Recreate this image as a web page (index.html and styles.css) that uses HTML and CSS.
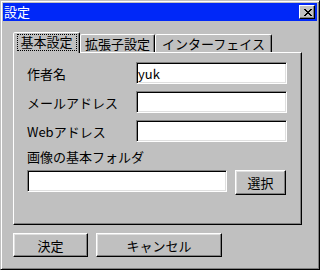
FILE: index.html
```html
<!DOCTYPE html>
<html lang="ja">
<head>
    <meta charset="UTF-8">
    <title>設定</title>
    <link rel="stylesheet" href="styles.css">
</head>
<body>
    <div class="window">
        <div class="titlebar">
            <span class="title">設定</span>
            <button class="close">
                <svg width="8" height="7" viewBox="0 0 8 7" shape-rendering="crispEdges"><path d="M0 0h2v1H0zM6 0h2v1H6zM1 1h2v1H1zM5 1h2v1H5zM2 2h4v1H2zM3 3h2v1H3zM2 4h4v1H2zM1 5h2v1H1zM5 5h2v1H5zM0 6h2v1H0zM6 6h2v1H6z" fill="#000"/></svg>
            </button>
        </div>

        <div class="body">
            <div class="tabs">
                <div class="tab active"><span class="focus">基本設定</span></div>
                <div class="tab tab-ext">拡張子設定</div>
                <div class="tab tab-ui">インターフェイス</div>
            </div>

            <div class="panel">
                <div class="row">
                    <label>作者名</label>
                    <input class="edit" type="text" value="yuk">
                </div>
                <div class="row">
                    <label>メールアドレス</label>
                    <input class="edit" type="text">
                </div>
                <div class="row">
                    <label>Webアドレス</label>
                    <input class="edit" type="text">
                </div>
                <div class="caption">画像の基本フォルダ</div>
                <div class="folder">
                    <input class="edit wide" type="text">
                    <button class="btn select">選択</button>
                </div>
            </div>

            <div class="actions">
                <button class="btn ok">決定</button>
                <button class="btn cancel">キャンセル</button>
            </div>
        </div>
    </div>
</body>
</html>
```

FILE: styles.css
```css
* {
    box-sizing: border-box;
}
body {
    margin: 0;
    font-family: "Noto Sans CJK JP", "Noto Sans", sans-serif;
    font-size: 13px;
    color: #000;
}
.window {
    width: 320px;
    height: 270px;
    background-color: #c0c0c0;
    border: 1px solid;
    border-color: #c0c0c0 #000 #000 #c0c0c0;
    box-shadow: inset 1px 1px #fff, inset -1px -1px #808080;
    padding: 2px;
}
.titlebar {
    height: 18px;
    background-color: #0028f8;
    color: #fff;
    display: flex;
    align-items: center;
    justify-content: space-between;
    padding: 0 2px 0 1px;
}
.title {
    line-height: 16px;
}
.close {
    width: 16px;
    height: 14px;
    padding: 0 0 0 1px;
    background-color: #c0c0c0;
    border: 1px solid;
    border-color: #fff #000 #000 #fff;
    box-shadow: inset -1px -1px #808080;
    display: flex;
    align-items: center;
    justify-content: center;
}
.body {
    padding: 11px 15px 0 10px;
}
.tabs {
    display: flex;
    align-items: flex-end;
    height: 20px;
}
.tab {
    height: 18px;
    background-color: #c0c0c0;
    border: 1px solid;
    border-bottom: 0;
    border-color: #fff #000 transparent #fff;
    border-radius: 2px 2px 0 0;
    box-shadow: inset -1px 0 #808080;
    display: flex;
    align-items: center;
    justify-content: center;
    line-height: 16px;
}
.tab.active {
    width: 67px;
    height: 21px;
    margin-bottom: -1px;
    position: relative;
    z-index: 1;
    align-items: flex-start;
    padding-top: 1px;
}
.focus {
    width: 60px;
    height: 17px;
    border: 1px dotted #000;
    text-align: center;
    line-height: 14px;
}
.tab-ext {
    width: 75px;
}
.tab-ui {
    width: 117px;
}
.panel {
    height: 173px;
    border: 1px solid;
    border-color: #fff #000 #000 #fff;
    box-shadow: inset -1px -1px #808080;
    padding: 9px 14px 0 13px;
}
.row {
    display: flex;
    align-items: center;
    height: 22px;
    margin-bottom: 7px;
}
.row label {
    width: 109px;
}
.edit {
    width: 151px;
    height: 22px;
    margin: 0;
    padding: 0 0 0 1px;
    font: inherit;
    color: #000;
    background-color: #fff;
    border: 1px solid;
    border-color: #808080 #fff #fff #808080;
    box-shadow: inset 1px 1px #000, inset -1px -1px #dfdfdf;
    outline: none;
}
.caption {
    margin-top: 2px;
    line-height: 16px;
}
.folder {
    display: flex;
    align-items: flex-start;
    margin-top: 5px;
}
.edit.wide {
    width: 200px;
    margin-right: 8px;
}
.btn {
    height: 24px;
    padding: 0;
    font: inherit;
    color: #000;
    background-color: #c0c0c0;
    border: 1px solid;
    border-color: #fff #000 #000 #fff;
    box-shadow: inset -1px -1px #808080, inset 1px 1px #dfdfdf;
}
.select {
    width: 51px;
    height: 25px;
}
.actions {
    display: flex;
    gap: 8px;
    margin-top: 8px;
}
.ok {
    width: 75px;
}
.cancel {
    width: 126px;
}
```
